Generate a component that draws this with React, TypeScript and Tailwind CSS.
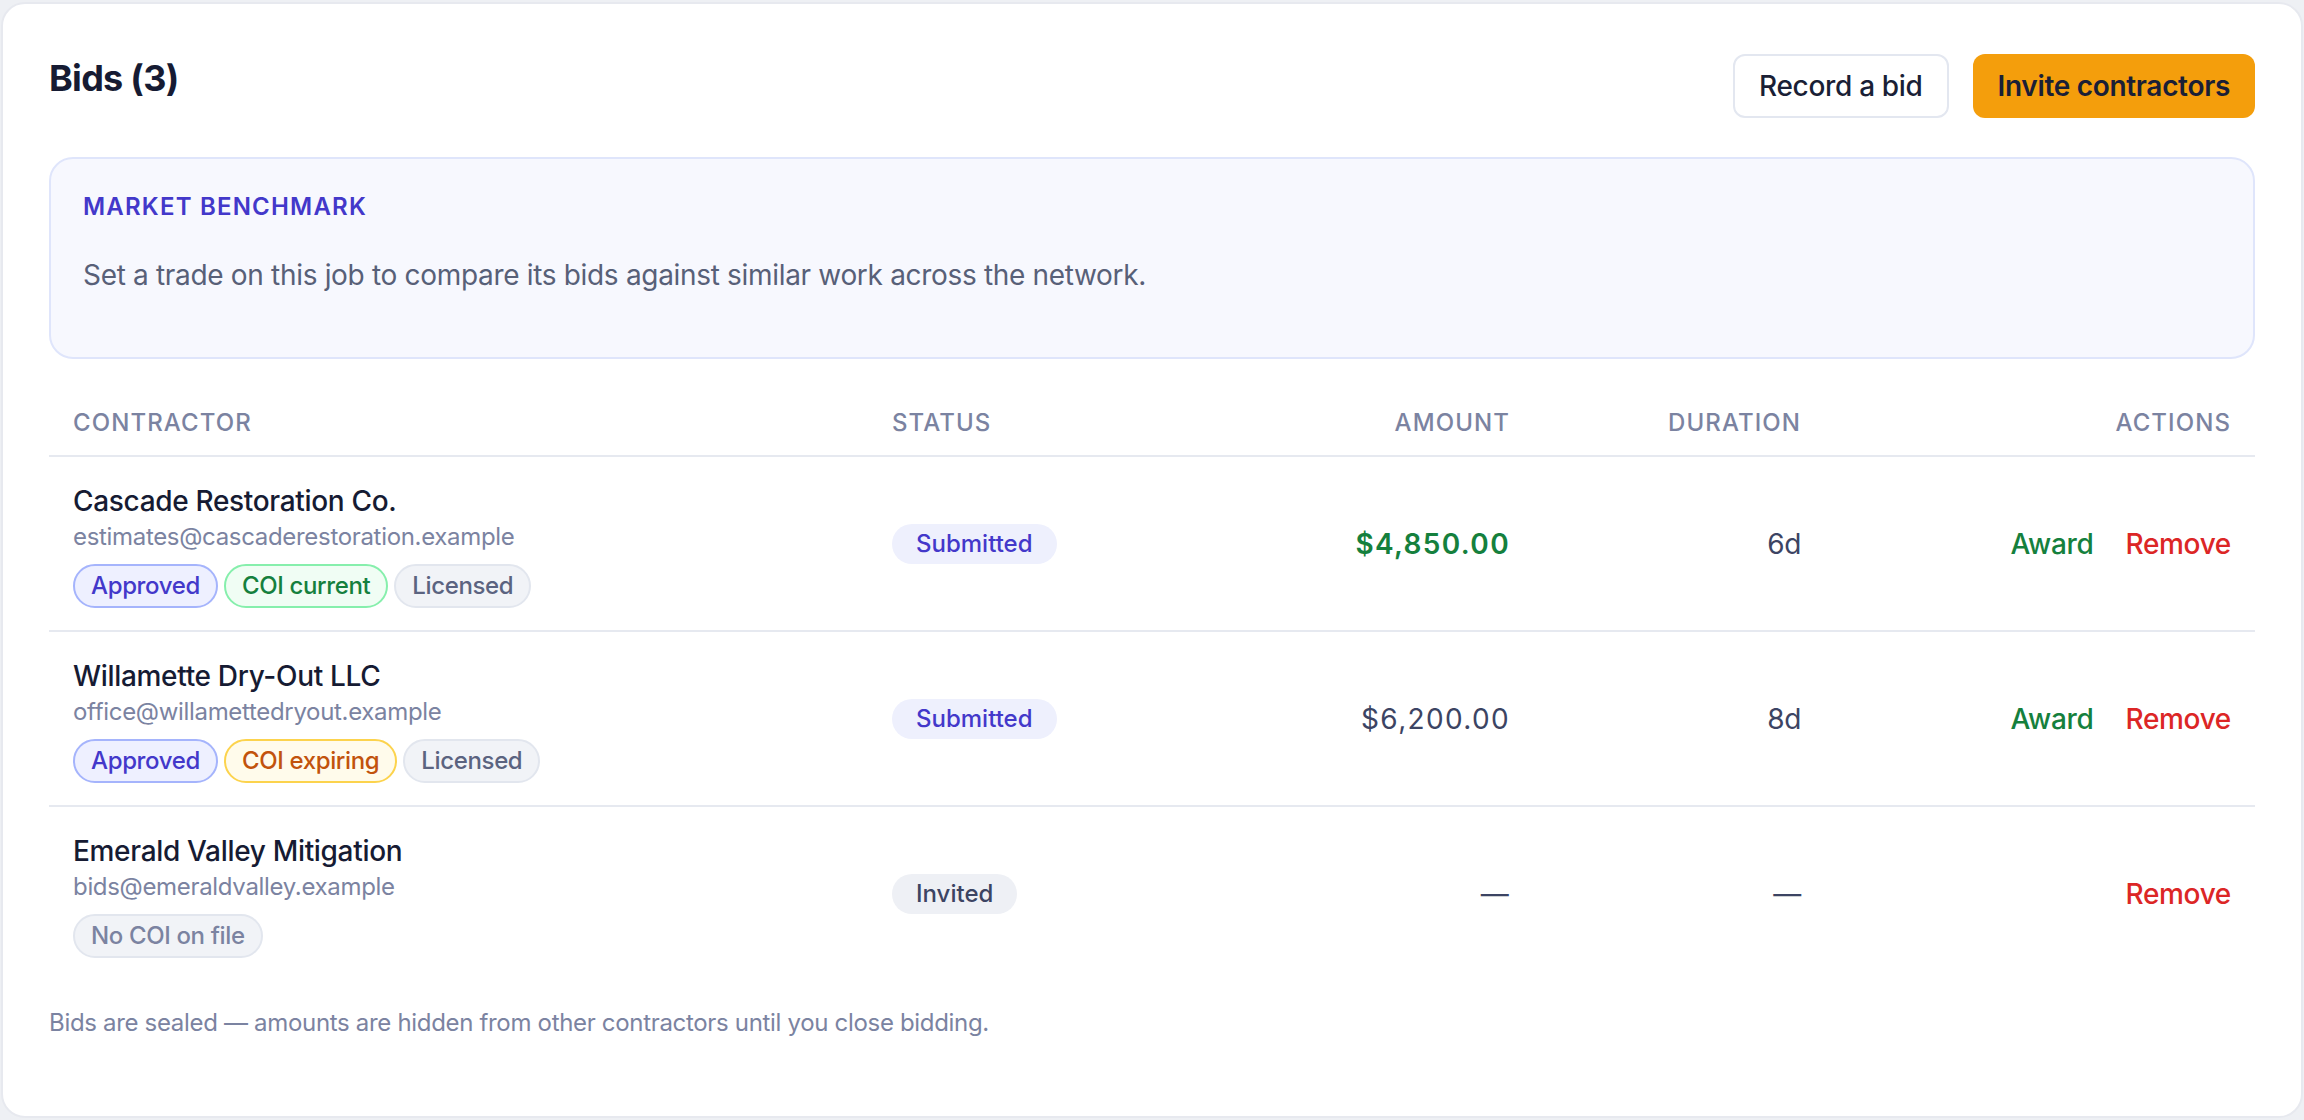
import React from "react";

type Badge = { label: string; tone: "indigo" | "green" | "amber" | "slate" | "muted" };

type Bid = {
  name: string;
  email: string;
  badges: Badge[];
  status: "Submitted" | "Invited";
  amount: string | null;
  lowest?: boolean;
  duration: string | null;
  canAward: boolean;
};

const bids: Bid[] = [
  {
    name: "Cascade Restoration Co.",
    email: "estimates@cascaderestoration.example",
    badges: [
      { label: "Approved", tone: "indigo" },
      { label: "COI current", tone: "green" },
      { label: "Licensed", tone: "slate" },
    ],
    status: "Submitted",
    amount: "$4,850.00",
    lowest: true,
    duration: "6d",
    canAward: true,
  },
  {
    name: "Willamette Dry-Out LLC",
    email: "office@willamettedryout.example",
    badges: [
      { label: "Approved", tone: "indigo" },
      { label: "COI expiring", tone: "amber" },
      { label: "Licensed", tone: "slate" },
    ],
    status: "Submitted",
    amount: "$6,200.00",
    duration: "8d",
    canAward: true,
  },
  {
    name: "Emerald Valley Mitigation",
    email: "bids@emeraldvalley.example",
    badges: [{ label: "No COI on file", tone: "muted" }],
    status: "Invited",
    amount: null,
    duration: null,
    canAward: false,
  },
];

const badgeTone: Record<Badge["tone"], string> = {
  indigo: "border-[#a5b4fc] bg-[#eef0ff] text-[#4338ca]",
  green: "border-[#86efac] bg-[#f0fdf4] text-[#15803d]",
  amber: "border-[#fcd34d] bg-[#fffbeb] text-[#c2530c]",
  slate: "border-[#e2e6ee] bg-[#f1f3f7] text-[#5b6380]",
  muted: "border-[#e2e6ee] bg-[#f1f3f7] text-[#7b83a1]",
};

function Pill({ badge }: { badge: Badge }) {
  return (
    <span
      className={`inline-flex items-center rounded-full border-2 px-4 py-1 text-2xl font-medium tracking-[-0.015em] ${badgeTone[badge.tone]}`}
    >
      {badge.label}
    </span>
  );
}

function StatusPill({ status }: { status: Bid["status"] }) {
  const tone =
    status === "Submitted"
      ? "bg-[#eef0fd] text-[#4338ca]"
      : "bg-[#eef0f5] text-[#3c4463]";
  return (
    <span className={`inline-flex rounded-full px-6 py-1 text-2xl font-medium tracking-normal ${tone}`}>
      {status}
    </span>
  );
}

const cols = "grid grid-cols-[819px_333px_333px_291px_1fr]";

export default function App() {
  return (
    <div className="min-h-[1120px] bg-[#eef0f4] px-px pt-[2px] font-['Inter',sans-serif] tracking-[-0.02em]">
      <div className="flex h-[1116px] flex-col rounded-3xl border-2 border-[#e7e9ef] bg-white px-[46px] pt-[46px]">
        {/* Header */}
        <div className="flex items-start justify-between">
          <h2 className="text-[36px] font-bold leading-[56px] tracking-[-0.02em] text-[#161b33]">Bids (3)</h2>
          <div className="mt-1 flex gap-6">
            <button className="h-16 rounded-xl border-2 border-[#e3e7f0] bg-white px-6 text-[28px] font-medium text-[#1a1f36]">
              Record a bid
            </button>
            <button className="h-16 rounded-xl bg-[#f49e0c] px-[25px] text-[28px] font-semibold text-[#1a1f36]">
              Invite contractors
            </button>
          </div>
        </div>

        {/* Benchmark */}
        <div className="mt-[39px] rounded-3xl border-2 border-[#dfe5fb] bg-[#f7f8fe] px-8 pb-[62px] pt-8">
          <div className="text-2xl font-semibold uppercase tracking-wider text-[#4338ca]">
            Market benchmark
          </div>
          <p className="mt-8 text-[28px] leading-10 text-[#586078]">
            Set a trade on this job to compare its bids against similar work across the network.
          </p>
        </div>

        {/* Table */}
        <div className="mt-8">
          <div
            className={`${cols} border-b-2 border-[#e6e9f0] text-2xl font-medium uppercase tracking-[0.045em] text-[#7b83a1]`}
          >
            <div className="px-6 py-4">Contractor</div>
            <div className="px-6 py-4">Status</div>
            <div className="px-6 py-4 text-right">Amount</div>
            <div className="px-6 py-4 text-right">Duration</div>
            <div className="px-6 py-4 text-right">Actions</div>
          </div>

          {bids.map((bid, i) => (
            <div
              key={bid.name}
              className={`${cols} items-center ${i < bids.length - 1 ? "border-b-2 border-[#e6e9f0]" : ""}`}
            >
              <div className="px-6 pb-[22px] pt-6">
                <div className="text-[28px] font-medium leading-10 text-[#161b33]">{bid.name}</div>
                <div className="text-2xl text-[#7b83a1]">{bid.email}</div>
                <div className="mt-[11px] flex flex-wrap gap-1.5">
                  {bid.badges.map((b) => (
                    <Pill key={b.label} badge={b} />
                  ))}
                </div>
              </div>
              <div className="px-6">
                <StatusPill status={bid.status} />
              </div>
              <div
                className={`px-6 text-right text-[28px] leading-10 tracking-[0.048em] ${
                  bid.lowest ? "font-semibold text-[#15803d]" : "text-[#3c4463]"
                }`}
              >
                {bid.amount ?? "—"}
              </div>
              <div className="px-6 text-right text-[28px] leading-10 text-[#3c4463]">
                {bid.duration ?? "—"}
              </div>
              <div className="flex justify-end gap-8 px-6 text-[28px] font-medium leading-10">
                {bid.canAward && <button className="text-[#15803d]">Award</button>}
                <button className="text-[#dc2626]">Remove</button>
              </div>
            </div>
          ))}
        </div>

        <p className="mt-[27px] text-2xl text-[#7b83a1]">
          Bids are sealed — amounts are hidden from other contractors until you close bidding.
        </p>
      </div>
    </div>
  );
}
